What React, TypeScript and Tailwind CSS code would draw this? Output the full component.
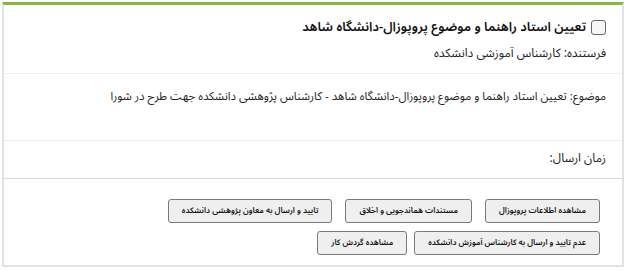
import React from "react";

const buttonsRowOne = [
  "مشاهده اطلاعات پروپوزال",
  "مستندات هماندجویی و اخلاق",
  "تایید و ارسال به معاون پژوهشی دانشکده",
];

const buttonsRowTwo = ["عدم تایید و ارسال به کارشناس آموزش دانشکده", "مشاهده گردش کار"];

function ActionButton({ label }: { label: string }) {
  return (
    <button
      type="button"
      className="h-[24px] px-[13px] rounded-[3px] border border-[#7a7a7a] bg-[#efefef] font-['Noto_Sans_Arabic','DejaVu_Sans',sans-serif] text-[8px] font-semibold text-[#111] whitespace-nowrap leading-none"
    >
      {label}
    </button>
  );
}

export default function App() {
  return (
    <div
      dir="rtl"
      className="w-[624px] h-[271px] bg-white pt-[2px] text-[#222] font-['Noto_Sans_Arabic','DejaVu_Sans',sans-serif]"
    >
      <div className="w-[622px] h-[265px] border-x-2 border-b-2 border-[#e1e1e8] border-t-[3px] border-t-[#84b93e] flex flex-col">
        {/* Header */}
        <div className="h-[69px] px-[16px] pt-[13px] border-b border-[#ececec]">
          <div className="flex items-center gap-[5px] h-[18px]">
            <span className="w-[15px] h-[15px] rounded-[3px] border border-[#666] bg-[#f6f6f6]" />
            <h1 className="text-[13px] font-semibold text-[#111] leading-none">
              تعیین استاد راهنما و موضوع پروپوزال-دانشگاه شاهد
            </h1>
          </div>
          <p className="mt-[12px] text-[12px] leading-none">فرستنده: کارشناس آموزشی دانشکده</p>
        </div>

        {/* Subject */}
        <div className="h-[67px] px-[16px] pt-[17px] border-b border-[#ececec]">
          <p className="text-[11.5px] leading-none">
            موضوع: تعیین استاد راهنما و موضوع پروپوزال-دانشگاه شاهد - کارشناس پژوهشی دانشکده جهت طرح در شورا
          </p>
        </div>

        {/* Send time */}
        <div className="h-[38px] px-[16px] pt-[12px] border-b border-[#d6d6d6]">
          <p className="text-[12px] leading-none">زمان ارسال:</p>
        </div>

        {/* Actions */}
        <div className="flex flex-col gap-[8px] pr-[22px] pt-[20px]">
          <div className="flex gap-[13px]">
            {buttonsRowOne.map((b) => (
              <ActionButton key={b} label={b} />
            ))}
          </div>
          <div className="flex gap-[7px]">
            {buttonsRowTwo.map((b) => (
              <ActionButton key={b} label={b} />
            ))}
          </div>
        </div>
      </div>
    </div>
  );
}
